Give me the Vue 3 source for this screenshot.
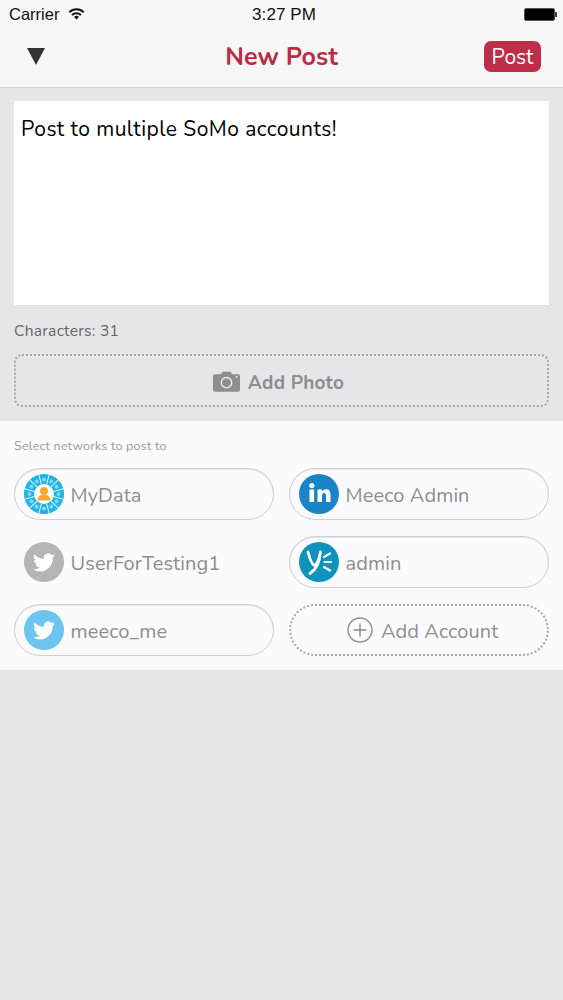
<script setup>
const n = 12
const segs = Array.from({ length: n }, (_, i) => i * 30 + 15)
</script>

<template>
  <div class="page">
    <header class="top">
      <div class="status">
        <div class="status-left">
          <span class="carrier">Carrier</span>
          <svg class="wifi" width="17" height="13" viewBox="0 0 17 13">
            <path d="M0.6 4.4 A11.5 11.5 0 0 1 16.4 4.4 L15 5.9 A9.4 9.4 0 0 0 2 5.9 Z" fill="#111" />
            <path d="M3.3 7.2 A7.6 7.6 0 0 1 13.7 7.2 L12.3 8.7 A5.6 5.6 0 0 0 4.7 8.7 Z" fill="#111" />
            <path d="M6 10 A3.6 3.6 0 0 1 11 10 L8.5 12.6 Z" fill="#111" />
          </svg>
        </div>
        <span class="time">3:27 PM</span>
        <div class="battery"><span class="cell"></span><span class="nub"></span></div>
      </div>
      <div class="nav">
        <svg class="tri" width="18" height="17" viewBox="0 0 18 17"><path d="M0 0 H18 L9 17 Z" fill="#333" /></svg>
        <h1 class="title">New Post</h1>
        <button class="post">Post</button>
      </div>
    </header>

    <main class="compose">
      <div class="editor">Post to multiple SoMo accounts!</div>
      <div class="count">Characters: 31</div>
      <div class="photo">
        <svg width="27" height="21" viewBox="0 0 28 21">
          <path fill="#8e8d90" d="M2 3 H8 L10 0.5 H18 L20 3 H26 Q28 3 28 5 V19 Q28 21 26 21 H2 Q0 21 0 19 V5 Q0 3 2 3 Z" />
          <circle cx="14" cy="11.7" r="5.4" fill="none" stroke="#eeedef" stroke-width="1.4" />
          <circle cx="24.5" cy="5.5" r="1" fill="#eeedef" />
        </svg>
        <span>Add Photo</span>
      </div>
    </main>

    <section class="networks">
      <div class="hint">Select networks to post to</div>
      <div class="grid">
        <div class="pill">
          <svg class="avatar" viewBox="0 0 40 40">
            <circle cx="20" cy="20" r="20" fill="#1db4e8" />
            <circle v-for="a in segs" :key="'d' + a" cx="20" cy="5.5" r="2" fill="#86d6f3" :transform="`rotate(${a + 15} 20 20)`" />
            <g stroke="#e6f7fd" stroke-width="1">
              <line v-for="a in segs" :key="a" x1="20" y1="10" x2="20" y2="0" :transform="`rotate(${a} 20 20)`" />
            </g>
            <circle cx="20" cy="20" r="10" fill="#fff" />
            <circle cx="20" cy="17" r="4" fill="#f6a833" />
            <path d="M13.5 26.5 Q14 21.5 17.5 21 H22.5 Q26 21.5 26.5 26.5 Z" fill="#f6a833" />
          </svg>
          <span>MyData</span>
        </div>
        <div class="pill">
          <svg class="avatar" viewBox="0 0 40 40">
            <circle cx="20" cy="20" r="20" fill="#1a84c6" />
            <rect x="10.5" y="15.5" width="4.6" height="12.5" fill="#fff" />
            <circle cx="12.8" cy="11.6" r="2.6" fill="#fff" />
            <path d="M18.5 15.5 H23 V17.5 Q24.5 15.2 27.5 15.2 Q31.5 15.2 31.5 21 V28 H27 V22 Q27 19 25 19 Q23 19 23 22 V28 H18.5 Z" fill="#fff" />
          </svg>
          <span>Meeco Admin</span>
        </div>
        <div class="pill off">
          <svg class="avatar" viewBox="0 0 40 40">
            <circle cx="20" cy="20" r="20" fill="#b5b4b6" />
            <path fill="#fff" d="M31 13.6a9 9 0 0 1-2.6.7 4.5 4.5 0 0 0 2-2.5 9 9 0 0 1-2.9 1.1 4.5 4.5 0 0 0-7.7 4.1A12.8 12.8 0 0 1 10.5 12.3a4.5 4.5 0 0 0 1.4 6 4.5 4.5 0 0 1-2-.6v.1a4.5 4.5 0 0 0 3.6 4.4 4.5 4.5 0 0 1-2 .1 4.5 4.5 0 0 0 4.2 3.1A9 9 0 0 1 9 27.3 12.8 12.8 0 0 0 28.7 16c.9-.6 1.7-1.4 2.3-2.4z" />
          </svg>
          <span>UserForTesting1</span>
        </div>
        <div class="pill">
          <svg class="avatar" viewBox="0 0 40 40">
            <circle cx="20" cy="20" r="20" fill="#0f93bd" />
            <path d="M9 10 Q12 22 15.5 23.5 Q19 22 21.5 10 M21.5 10 Q20 26 11 31.5" fill="none" stroke="#fff" stroke-width="2.8" stroke-linecap="round" />
            <path d="M25 15 L31 11.5 M25.5 20 H32 M25 25 L31 28.5" fill="none" stroke="#fff" stroke-width="2.2" stroke-linecap="round" />
          </svg>
          <span>admin</span>
        </div>
        <div class="pill">
          <svg class="avatar" viewBox="0 0 40 40">
            <circle cx="20" cy="20" r="20" fill="#6cc5ee" />
            <path fill="#fff" d="M31 13.6a9 9 0 0 1-2.6.7 4.5 4.5 0 0 0 2-2.5 9 9 0 0 1-2.9 1.1 4.5 4.5 0 0 0-7.7 4.1A12.8 12.8 0 0 1 10.5 12.3a4.5 4.5 0 0 0 1.4 6 4.5 4.5 0 0 1-2-.6v.1a4.5 4.5 0 0 0 3.6 4.4 4.5 4.5 0 0 1-2 .1 4.5 4.5 0 0 0 4.2 3.1A9 9 0 0 1 9 27.3 12.8 12.8 0 0 0 28.7 16c.9-.6 1.7-1.4 2.3-2.4z" />
          </svg>
          <span>meeco_me</span>
        </div>
        <div class="pill add">
          <svg width="26" height="26" viewBox="0 0 26 26" fill="none" stroke="#8f8f91" stroke-width="1.4">
            <circle cx="13" cy="13" r="12" />
            <path d="M13 6.5 V19.5 M6.5 13 H19.5" />
          </svg>
          <span>Add Account</span>
        </div>
      </div>
    </section>
  </div>
</template>

<style scoped>
.page {
  width: 563px;
  height: 1000px;
  overflow: hidden;
  background: #e6e5e8;
  font-family: "Nunito", "Lato", "Open Sans", sans-serif;
  display: flex;
  flex-direction: column;
}
.top {
  height: 87px;
  background: #f7f7f7;
  border-bottom: 1px solid #d2d2d4;
  flex-shrink: 0;
}
.status {
  height: 29px;
  padding: 0 6px 0 9px;
  display: flex;
  align-items: center;
  justify-content: space-between;
  font-family: "Liberation Sans", sans-serif;
  color: #111;
  position: relative;
}
.status-left {
  display: flex;
  align-items: center;
  gap: 9px;
}
.carrier {
  font-size: 16.5px;
}
.wifi {
  margin-top: -3px;
}
.time {
  position: absolute;
  left: 252px;
  top: 5px;
  font-size: 17px;
  letter-spacing: 0.1px;
}
.battery {
  display: flex;
  align-items: center;
  margin-top: 0;
}
.cell {
  width: 31px;
  height: 13px;
  box-sizing: border-box;
  background: #000;
  border-radius: 2px;
  border: 1px solid #555;
}
.nub {
  width: 2px;
  height: 5px;
  background: #444;
}
.nav {
  height: 58px;
  position: relative;
  display: flex;
  align-items: center;
  justify-content: center;
}
.tri {
  position: absolute;
  left: 27px;
  top: 19px;
}
.title {
  margin: 0;
  font-size: 25px;
  font-weight: 700;
  color: #b82c44;
  letter-spacing: 0.1px;
  position: relative;
  top: -1px;
}
.post {
  position: absolute;
  left: 484px;
  top: 12px;
  width: 57px;
  height: 31px;
  padding: 0;
  border: 0;
  border-radius: 7px;
  background: #bd2e48;
  color: #fff;
  font-family: inherit;
  font-size: 21px;
  font-weight: 400;
}
.compose {
  padding: 13px 14px 14px;
  height: 333px;
  box-sizing: border-box;
  flex-shrink: 0;
}
.editor {
  height: 204px;
  background: #fff;
  box-sizing: border-box;
  padding: 14px 7px;
  font-size: 21px;
  line-height: 28px;
  color: #000;
  letter-spacing: 0.45px;
}
.count {
  margin-top: 16px;
  height: 20px;
  line-height: 20px;
  font-size: 15.5px;
  color: #66656a;
  letter-spacing: 0.3px;
}
.photo {
  margin-top: 13px;
  height: 53px;
  box-sizing: border-box;
  border: 2px dotted #a8a7aa;
  border-radius: 8px;
  padding-top: 4px;
  padding-right: 6px;
  display: flex;
  align-items: center;
  justify-content: center;
  gap: 8px;
  font-size: 19px;
  font-weight: 700;
  color: #8e8d90;
  letter-spacing: 0.2px;
}
.photo svg {
  margin-top: -3px;
}
.networks {
  height: 249px;
  flex-shrink: 0;
  box-sizing: border-box;
  background: #fbfafc;
  padding: 16px 14px 0;
}
.hint {
  font-size: 12.5px;
  line-height: 17px;
  color: #9a999d;
  letter-spacing: 0.22px;
}
.grid {
  margin-top: 14px;
  display: grid;
  grid-template-columns: 260px 260px;
  justify-content: space-between;
  grid-auto-rows: 52px;
  row-gap: 16px;
}
.pill {
  box-sizing: border-box;
  border: 1px solid #cfced0;
  box-shadow: inset 0 1px 0 #e8e7e9;
  border-radius: 26px;
  padding-left: 8.5px;
  display: flex;
  align-items: center;
  gap: 7px;
  font-size: 20px;
  color: #8e8d90;
  letter-spacing: 0.1px;
}
.pill span {
  position: relative;
  top: 1px;
}
.pill.off {
  border-color: transparent;
  box-shadow: none;
}
.pill.add {
  border: 2px dotted #a8a7aa;
  box-shadow: none;
  padding-left: 56px;
  gap: 8px;
}
.avatar {
  width: 40px;
  height: 40px;
  flex-shrink: 0;
}
</style>
